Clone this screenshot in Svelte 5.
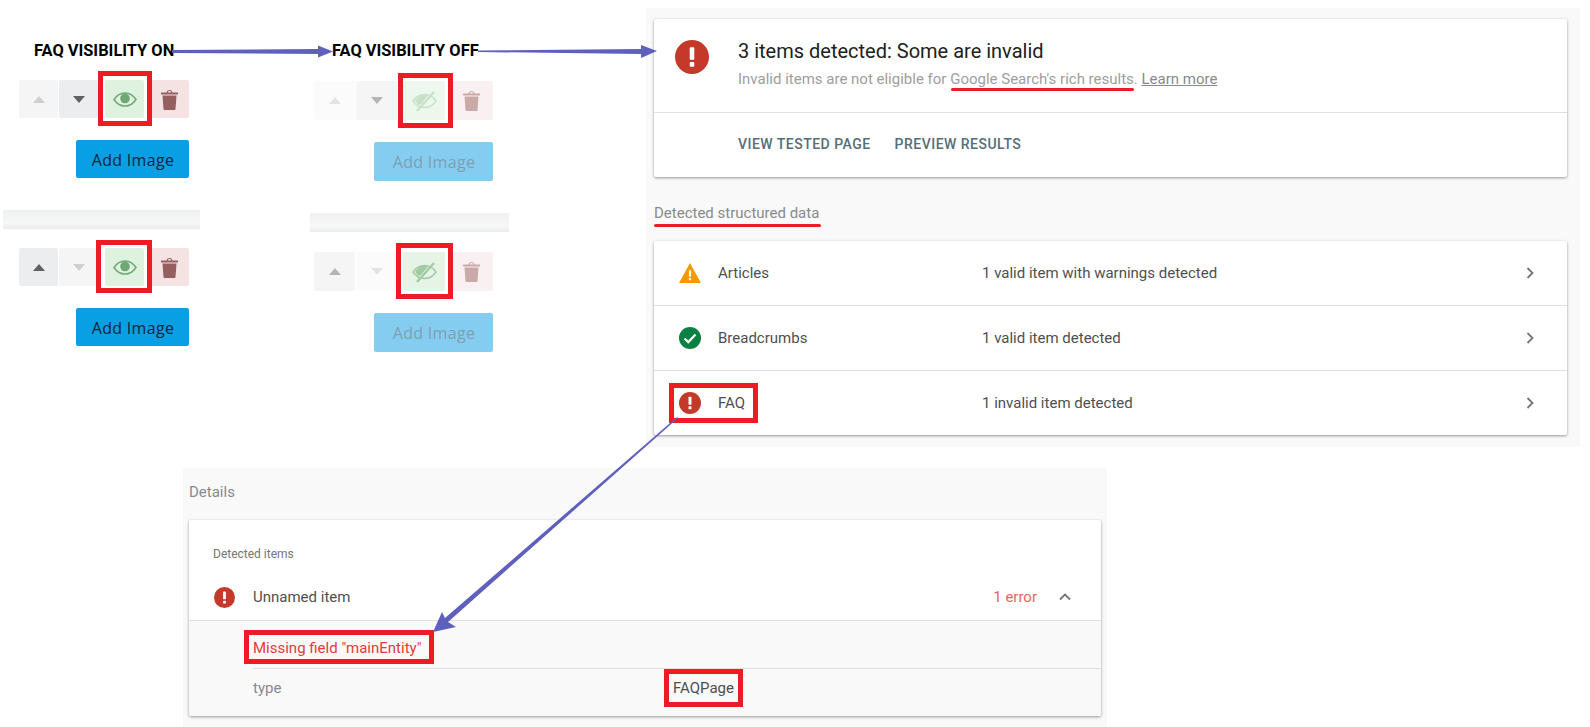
<script>
  const toolbars = [
    { cls: "t1", up: "dim", down: "strong", eye: "on" },
    { cls: "t2", up: "dim", down: "mid", eye: "off" },
    { cls: "t3", up: "strong", down: "dim", eye: "on" },
    { cls: "t4", up: "mid", down: "dim", eye: "off" },
  ];
  const addButtons = [
    { cls: "b1" },
    { cls: "b2 faded" },
    { cls: "b3" },
    { cls: "b4 faded" },
  ];
  const rows = [
    { icon: "warn", name: "Articles", text: "1 valid item with warnings detected" },
    { icon: "ok", name: "Breadcrumbs", text: "1 valid item detected" },
    { icon: "err", name: "FAQ", text: "1 invalid item detected" },
  ];
  const redBoxes = ["r1", "r2", "r3", "r4", "r5", "r6", "r7"];
</script>

{#snippet errorIcon(size)}
  <svg width={size} height={size} viewBox="0 0 24 24">
    <circle cx="12" cy="12" r="12" fill="#c5392a" />
    <rect x="10.4" y="5.2" width="3.2" height="8.8" rx="0.6" fill="#fff" />
    <rect x="10.4" y="15.6" width="3.2" height="3.2" rx="0.6" fill="#fff" />
  </svg>
{/snippet}

{#snippet chevron()}
  <svg width="24" height="24" viewBox="0 0 24 24"><path d="M9.500 7l5 5-5 5" fill="none" stroke="#757575" stroke-width="1.800" /></svg>
{/snippet}

{#snippet toolbar(t)}
  <div class="toolbar {t.cls}">
    <span class="tool arrow {t.up}"><i class="tri up"></i></span>
    <span class="tool arrow {t.down}"><i class="tri down"></i></span>
    <span class="tool eye">
      {#if t.eye === "on"}
        <svg width="24" height="15" viewBox="0 0 24 15">
          <path d="M1 7.500C4 3 7.500 1 12 1s8 2 11 6.500C20 12 16.500 14 12 14S4 12 1 7.500z" fill="none" stroke="currentColor" stroke-width="1.500" />
          <circle cx="12" cy="6.500" r="4.800" fill="currentColor" />
        </svg>
      {:else}
        <svg width="25" height="22" viewBox="0 0 25 22">
          <path d="M1 11c3-4.500 6.500-6.500 11.500-6.500S21 6.500 24 11c-3 4.500-6.500 6.500-11.500 6.500S4 15.500 1 11z" fill="none" stroke="currentColor" stroke-width="1.400" />
          <path d="M3 10.500c3-4 6-6 10-6l3 1-7 8.500-3 1z" fill="currentColor" />
          <path d="M5 21L22 2" stroke="currentColor" stroke-width="2.400" />
        </svg>
      {/if}
    </span>
    <span class="tool trash">
      <svg width="17" height="21" viewBox="0 0 17 21">
        <path d="M0 3.500h17v2H0zM5.500 3.500c0-3.500 6-3.500 6 0h-1.200c0-2-3.600-2-3.600 0zM1.500 6.500h14l-1 13.500a1 1 0 0 1-1 1h-10a1 1 0 0 1-1-1z" fill="currentColor" />
      </svg>
    </span>
  </div>
{/snippet}

<div class="canvas">
  <div class="heading on">FAQ VISIBILITY ON</div>
  <div class="heading off">FAQ VISIBILITY OFF</div>

  {#each toolbars as t}
    {@render toolbar(t)}
  {/each}
  {#each addButtons as b}
    <button class="add {b.cls}">Add Image</button>
  {/each}
  <div class="sep s1"></div>
  <div class="sep s2"></div>

  <section class="panel summary-panel">
    <div class="card summary">
      <div class="summary-top">
        <span class="summary-icon">{@render errorIcon(34)}</span>
        <div>
          <h1>3 items detected: Some are invalid</h1>
          <p>Invalid items are not eligible for Google Search's rich results. <u>Learn more</u></p>
        </div>
      </div>
      <div class="actions">
        <span>VIEW TESTED PAGE</span>
        <span>PREVIEW RESULTS</span>
      </div>
    </div>
    <h2>Detected structured data</h2>
    <div class="card list">
      {#each rows as row}
        <div class="row">
          <span class="row-icon">
            {#if row.icon === "warn"}
              <svg width="24" height="22" viewBox="0 0 24 22">
                <path d="M12 0l12 22H0z" fill="#f29900" />
                <rect x="10.800" y="8" width="2.400" height="7" fill="#fff" />
                <rect x="10.800" y="16.500" width="2.400" height="2.400" fill="#fff" />
              </svg>
            {:else if row.icon === "ok"}
              <svg width="22" height="22" viewBox="0 0 22 22">
                <circle cx="11" cy="11" r="11" fill="#0b8043" />
                <path d="M5.500 11.500l3.800 3.600 7.200-7.600" fill="none" stroke="#fff" stroke-width="2.200" />
              </svg>
            {:else}
              {@render errorIcon(22)}
            {/if}
          </span>
          <span class="row-name">{row.name}</span>
          <span class="row-text">{row.text}</span>
          {@render chevron()}
        </div>
      {/each}
    </div>
  </section>

  <section class="panel details-panel">
    <h2>Details</h2>
    <div class="card details">
      <div class="detected">Detected items</div>
      <div class="item">
        <span class="item-icon">{@render errorIcon(21)}</span>
        <span class="item-name">Unnamed item</span>
        <span class="item-error">1 error</span>
        <svg width="24" height="24" viewBox="0 0 24 24"><path d="M7 14.500l5-5 5 5" fill="none" stroke="#757575" stroke-width="1.800" /></svg>
      </div>
      <div class="expanded">
        <div class="missing">Missing field "mainEntity"</div>
        <div class="field">
          <span class="field-key">type</span>
          <span class="field-value">FAQPage</span>
        </div>
      </div>
    </div>
  </section>

  {#each redBoxes as r}
    <div class="redbox {r}"></div>
  {/each}
  <div class="redline l1"></div>
  <div class="redline l2"></div>

  <svg class="overlay" width="1590" height="727" viewBox="0 0 1590 727">
    <g fill="#5f5fbd">
      <path d="M172 50L318 49V45.500L333 51.500 318 57.500V54L172 53z" />
      <path d="M478 50.500L641 49V45L657 51 641 58V54L478 52z" />
      <path d="M677 417L678 418 448 622 456 627 433 632 442 612 445 618z" />
    </g>
  </svg>
</div>

<style>
  :global(body) {
    margin: 0;
    background: #fff;
  }
  .canvas {
    position: relative;
    width: 1590px;
    height: 727px;
    overflow: hidden;
    font-family: Roboto, "Liberation Sans", sans-serif;
    color: #4f4f4f;
  }
  .overlay {
    position: absolute;
    left: 0;
    top: 0;
    pointer-events: none;
  }
  .heading {
    position: absolute;
    top: 42px;
    font-size: 16.400px;
    line-height: 18px;
    font-weight: 700;
    color: #000;
    white-space: nowrap;
  }
  .heading.on {
    left: 34px;
  }
  .heading.off {
    left: 332px;
  }

  .toolbar {
    position: absolute;
    display: flex;
    gap: 1px;
  }
  .t1 {
    left: 19px;
    top: 80px;
  }
  .t2 {
    left: 314px;
    top: 81px;
  }
  .t3 {
    left: 19px;
    top: 248px;
  }
  .t4 {
    left: 314px;
    top: 252px;
  }
  .tool {
    display: flex;
    align-items: center;
    justify-content: center;
    width: 39px;
    height: 38px;
    border-radius: 2px;
  }
  .t2 .tool,
  .t4 .tool {
    width: 41px;
    height: 39px;
  }
  .eye {
    margin-left: 6px;
  }
  .trash {
    margin-left: 5px;
    background: #f5e3e3;
    color: #955f5f;
  }
  .t2 .trash,
  .t4 .trash {
    background: #f9f0f1;
    color: #caa9a9;
    width: 43px;
    margin-left: 4px;
  }
  .t2 .eye,
  .t4 .eye {
    width: 42px;
    margin-left: 5px;
  }
  .t1 .eye,
  .t3 .eye {
    background: #dff2df;
    color: #6fa874;
  }
  .t2 .eye {
    background: #edf7ed;
    color: #c8e2c8;
  }
  .t4 .eye {
    background: #e5f4e5;
    color: #a3cba3;
  }
  .tri {
    display: block;
    width: 0;
    height: 0;
    border-left: 6px solid transparent;
    border-right: 6px solid transparent;
  }
  .tri.up {
    border-bottom: 7px solid currentColor;
  }
  .tri.down {
    border-top: 7px solid currentColor;
  }
  .arrow.dim {
    background: #f5f5f5;
    color: #cfcfcf;
  }
  .arrow.strong {
    background: #ecedef;
    color: #606060;
  }
  .arrow.mid {
    background: #f5f5f5;
    color: #b5b5b5;
  }
  .t2 .arrow.dim,
  .t4 .arrow.dim {
    background: #fbfbfb;
    color: #e4e4e4;
  }

  .add {
    position: absolute;
    height: 38px;
    width: 113px;
    border: 0;
    border-radius: 2px;
    padding: 0 0 0 1px;
    background: #089fe4;
    color: #14263a;
    font-family: "Open Sans", sans-serif;
    font-size: 16px;
    letter-spacing: 0.300px;
    line-height: 40px;
  }
  .b1 {
    left: 76px;
    top: 140px;
  }
  .b2 {
    left: 374px;
    top: 142px;
  }
  .b3 {
    left: 76px;
    top: 308px;
  }
  .b4 {
    left: 374px;
    top: 313px;
  }
  .faded {
    width: 119px;
    height: 39px;
    background: #84cdf1;
    color: #7f9fb0;
  }
  .sep {
    position: absolute;
    height: 19px;
    background: linear-gradient(#f0f0f0, #f6f7f7 70%, #ececec);
  }
  .s1 {
    left: 3px;
    top: 210px;
    width: 197px;
  }
  .s2 {
    left: 310px;
    top: 213px;
    width: 199px;
  }

  .panel {
    position: absolute;
    background: #f9f9f9;
    box-sizing: border-box;
  }
  .card {
    background: #fff;
    border-radius: 2px;
    box-shadow: 0 1px 3px rgba(0, 0, 0, 0.4);
  }
  .summary-panel {
    left: 646px;
    top: 8px;
    width: 934px;
    height: 439px;
    padding: 11px 13px 0 8px;
  }
  .summary {
    height: 158px;
    display: flex;
    flex-direction: column;
  }
  .summary-top {
    height: 93px;
    display: flex;
    align-items: flex-start;
    border-bottom: 1px solid #e0e0e0;
    padding-left: 21px;
  }
  .summary-icon {
    display: block;
    width: 63px;
    padding-top: 21px;
  }
  h1 {
    margin: 19px 0 0;
    font-size: 20px;
    line-height: 26px;
    font-weight: 400;
    color: #212121;
  }
  .summary p {
    margin: 6px 0 0;
    font-size: 15px;
    line-height: 18px;
    color: #9e9e9e;
  }
  .summary u {
    color: #8a8a8a;
  }
  .actions {
    display: flex;
    gap: 24px;
    padding: 22px 0 0 84px;
    font-size: 14px;
    line-height: 18px;
    font-weight: 500;
    letter-spacing: 0.480px;
    color: #546e7a;
  }
  h2 {
    margin: 0;
    font-size: 15px;
    line-height: 18px;
    font-weight: 400;
    color: #8a8a8a;
  }
  .summary-panel h2 {
    margin: 27px 0 19px;
  }
  .row {
    height: 64px;
    display: flex;
    align-items: center;
    font-size: 15px;
    padding: 0 25px;
    border-bottom: 1px solid #e0e0e0;
  }
  .row:last-child {
    border-bottom: 0;
  }
  .row-icon {
    display: flex;
    justify-content: center;
    width: 22px;
    margin-right: 17px;
  }
  .row-name {
    width: 264px;
  }
  .row-text {
    flex: 1;
  }

  .details-panel {
    left: 183px;
    top: 468px;
    width: 924px;
    height: 259px;
    padding: 15px 6px 0 6px;
  }
  .details-panel h2 {
    margin-bottom: 19px;
  }
  .details {
    height: 196px;
    font-size: 15px;
  }
  .detected {
    padding: 26px 0 0 24px;
    font-size: 12px;
    line-height: 16px;
    color: #757575;
  }
  .item {
    height: 46px;
    margin-top: 12px;
    display: flex;
    align-items: center;
    padding: 0 24px 0 25px;
    border-bottom: 1px solid #e0e0e0;
  }
  .item-icon {
    display: flex;
    width: 39px;
  }
  .item-name {
    flex: 1;
  }
  .item-error {
    color: #e8665c;
    margin-right: 16px;
  }
  .expanded {
    background: #f9f9f9;
    padding-left: 64px;
    height: 95px;
    border-radius: 0 0 2px 2px;
  }
  .missing {
    height: 47px;
    line-height: 55px;
    color: #e53935;
    border-bottom: 1px solid #e0e0e0;
  }
  .field {
    display: flex;
    height: 40px;
    line-height: 38px;
  }
  .field-key {
    width: 420px;
    color: #8a8a8a;
  }

  .redbox {
    position: absolute;
    box-sizing: border-box;
    border: 5px solid #ed1c24;
  }
  .r1 {
    left: 98px;
    top: 71px;
    width: 54px;
    height: 55px;
  }
  .r2 {
    left: 398px;
    top: 73px;
    width: 55px;
    height: 55px;
  }
  .r3 {
    left: 96px;
    top: 240px;
    width: 56px;
    height: 53px;
  }
  .r4 {
    left: 396px;
    top: 243px;
    width: 57px;
    height: 56px;
  }
  .r5 {
    left: 669px;
    top: 383px;
    width: 89px;
    height: 40px;
  }
  .r6 {
    left: 244px;
    top: 630px;
    width: 190px;
    height: 34px;
  }
  .r7 {
    left: 664px;
    top: 669px;
    width: 79px;
    height: 38px;
  }
  .redline {
    position: absolute;
    height: 3px;
    border-radius: 2px;
    background: #ed1c24;
  }
  .l1 {
    left: 951px;
    top: 88px;
    width: 183px;
  }
  .l2 {
    left: 654px;
    top: 224px;
    width: 167px;
  }
</style>
